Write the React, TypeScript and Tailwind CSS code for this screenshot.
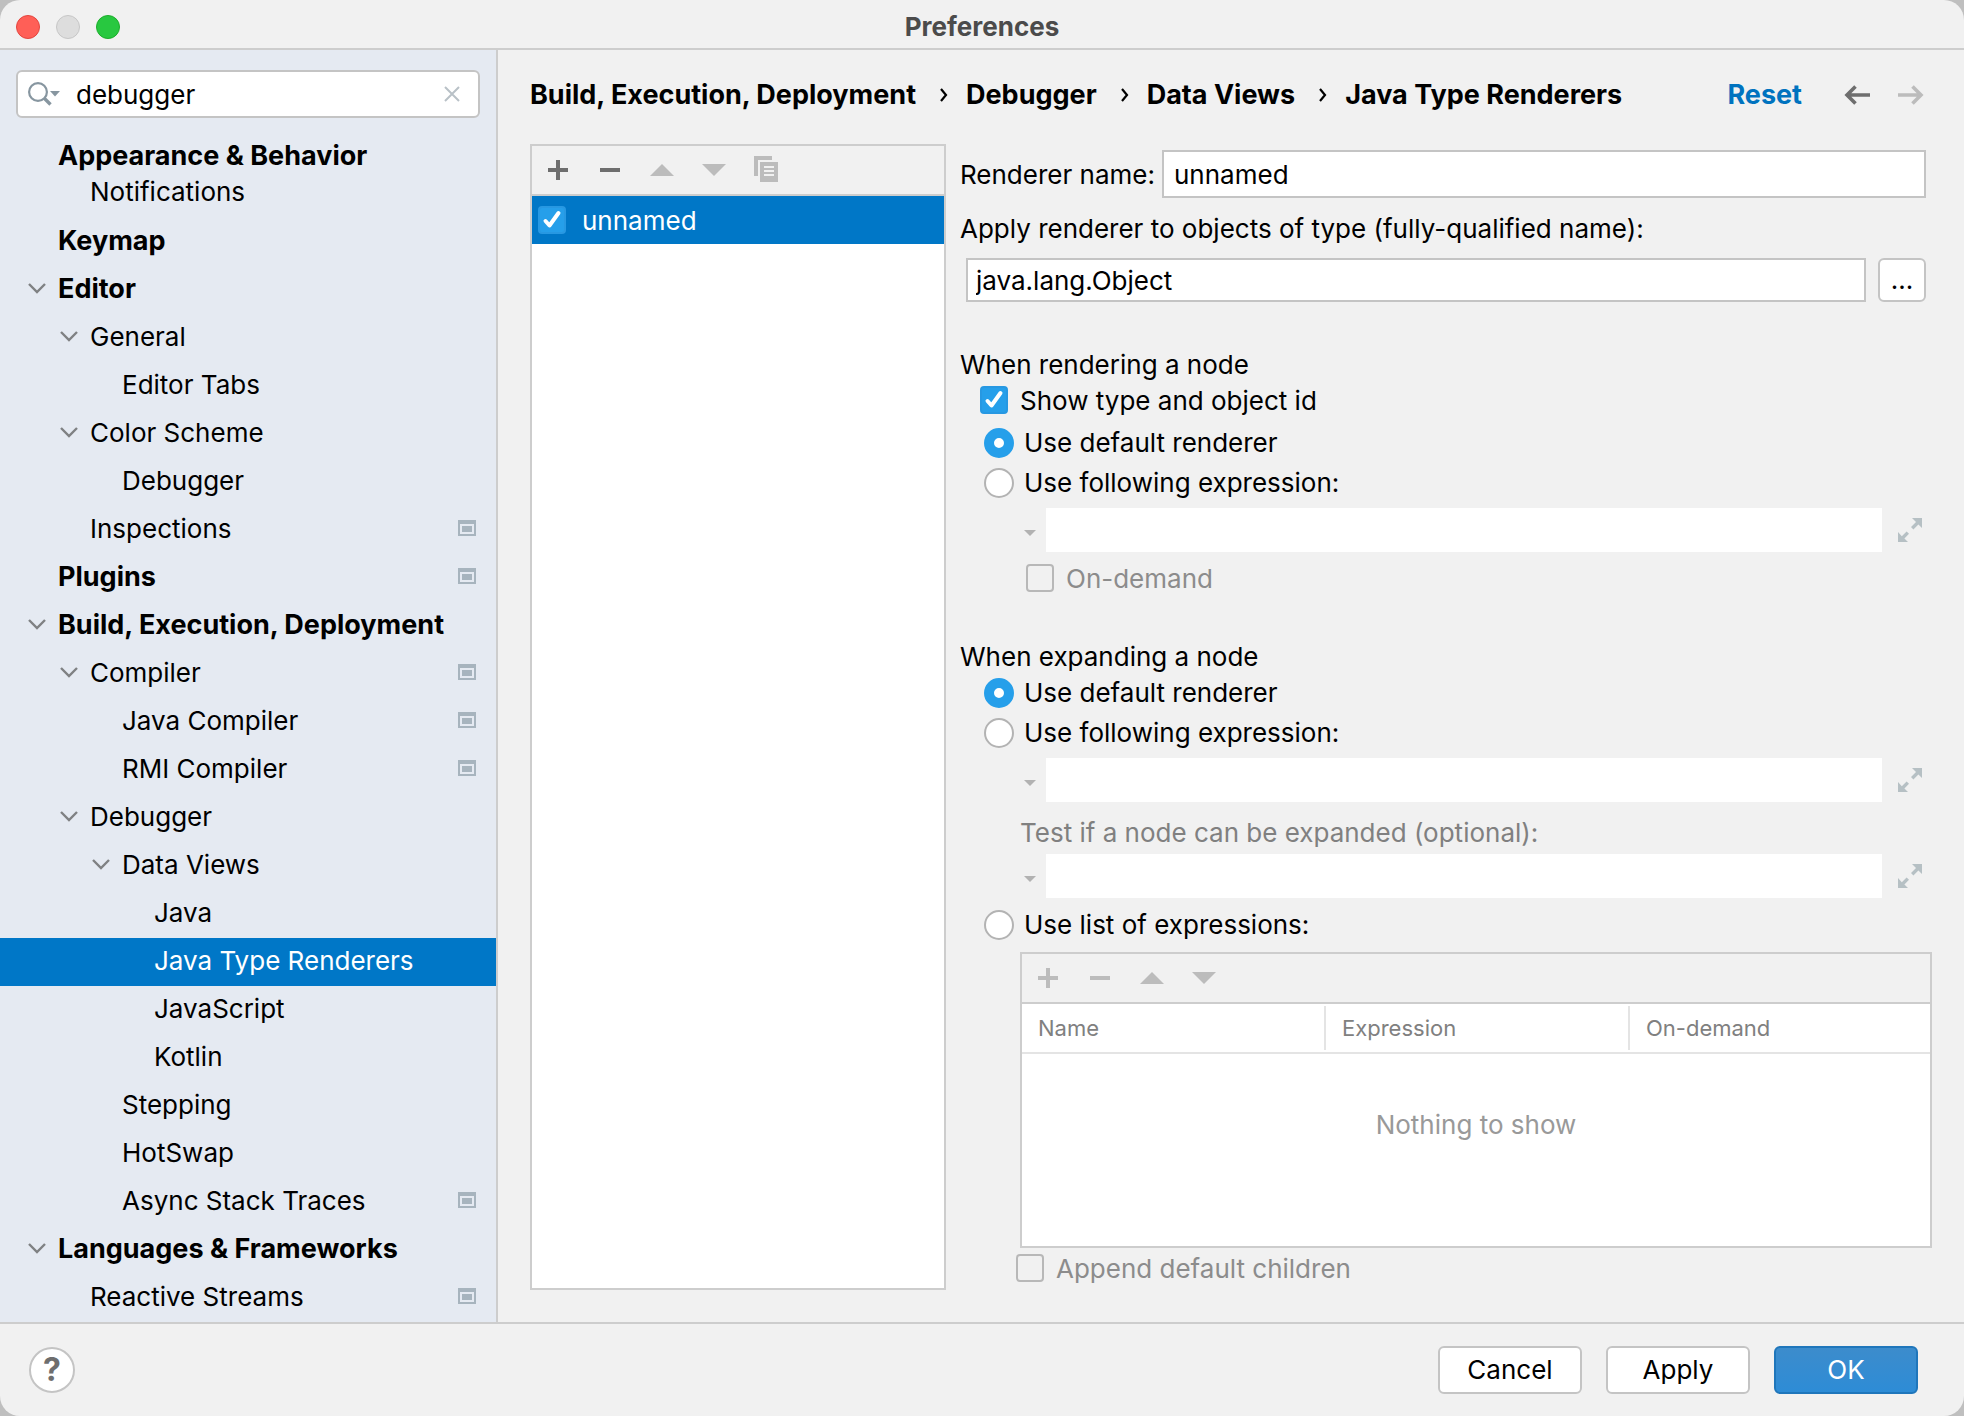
import { useId, useState } from 'react';
import type { ReactNode } from 'react';
import clsx from 'clsx';

interface TreeItem {
  label: string;
  level: number;
  bold?: boolean;
  open?: boolean;
  project?: boolean;
}

const tree: TreeItem[] = [
  { label: 'Keymap', level: 0, bold: true },
  { label: 'Editor', level: 0, bold: true, open: true },
  { label: 'General', level: 1, open: true },
  { label: 'Editor Tabs', level: 2 },
  { label: 'Color Scheme', level: 1, open: true },
  { label: 'Debugger', level: 2 },
  { label: 'Inspections', level: 1, project: true },
  { label: 'Plugins', level: 0, bold: true, project: true },
  { label: 'Build, Execution, Deployment', level: 0, bold: true, open: true },
  { label: 'Compiler', level: 1, open: true, project: true },
  { label: 'Java Compiler', level: 2, project: true },
  { label: 'RMI Compiler', level: 2, project: true },
  { label: 'Debugger', level: 1, open: true },
  { label: 'Data Views', level: 2, open: true },
  { label: 'Java', level: 3 },
  { label: 'Java Type Renderers', level: 3 },
  { label: 'JavaScript', level: 3 },
  { label: 'Kotlin', level: 3 },
  { label: 'Stepping', level: 2 },
  { label: 'HotSwap', level: 2 },
  { label: 'Async Stack Traces', level: 2, project: true },
  { label: 'Languages & Frameworks', level: 0, bold: true, open: true },
  { label: 'Reactive Streams', level: 1, project: true },
];

const indents = ['pl-7', 'pl-[60px]', 'pl-[92px]', 'pl-[124px]'];
const crumbs = ['Build, Execution, Deployment', 'Debugger', 'Data Views', 'Java Type Renderers'];

function Chevron() {
  return (
    <svg width="18" height="14" viewBox="0 0 18 14" fill="none" stroke="#7f8183" strokeWidth="2.4">
      <path d="M1 2l8 8 8-8" />
    </svg>
  );
}

function ProjectIcon() {
  return (
    <svg width="18" height="18" viewBox="0 0 18 18" fill="#a7b4be">
      <path fillRule="evenodd" d="M0 0h18v16H0zM2 4v10h14V4z" />
      <path d="M4 6h10v6H4z" />
    </svg>
  );
}

function TreeRow({ item, selected, onSelect }: { item: TreeItem; selected: boolean; onSelect: () => void }) {
  return (
    <button
      onClick={onSelect}
      className={clsx(
        'flex h-12 w-full items-center pb-0.5 pr-5 text-left',
        indents[item.level],
        item.bold && 'text-[27px] font-bold',
        selected && 'bg-[#0077c7] text-white'
      )}
    >
      <span className="mr-3 w-[18px] shrink-0">{item.open && <Chevron />}</span>
      <span className="flex-1 whitespace-nowrap">{item.label}</span>
      {item.project && <ProjectIcon />}
    </button>
  );
}

function Sidebar() {
  const [query, setQuery] = useState('debugger');
  const [selected, setSelected] = useState(15);
  return (
    <aside className="w-[498px] shrink-0 border-r-2 border-[#cdcdcd] bg-[#e5eaf2]">
      <div className="mx-4 mt-5 mb-5 flex h-12 items-center rounded-md border-2 border-[#c4c4c4] bg-white pl-2.5 pr-4">
        <svg width="34" height="26" viewBox="0 0 34 26" fill="none">
          <circle cx="10" cy="11" r="8.9" stroke="#8796a0" strokeWidth="2.2" />
          <path d="M16.5 17.500l6 6" stroke="#8796a0" strokeWidth="3.4" />
          <path d="M22 10h10l-5 5.500z" fill="#8796a0" />
        </svg>
        <input
          aria-label="Search settings"
          value={query}
          onChange={e => setQuery(e.target.value)}
          className="ml-3.5 min-w-0 flex-1 bg-transparent pt-0.5 outline-none"
        />
        <button aria-label="Clear search" onClick={() => setQuery('')} className="p-0.5">
          <svg width="16" height="16" viewBox="0 0 16 16" stroke="#b9c1c7" strokeWidth="2">
            <path d="M1 1l14 14M15 1L1 15" />
          </svg>
        </button>
      </div>
      <nav>
        <button className="block h-9 w-full pl-[58px] text-left text-[27px] font-bold">Appearance &amp; Behavior</button>
        <button className="mb-2 block h-9 w-full pl-[90px] text-left">Notifications</button>
        {tree.map((item, i) => (
          <TreeRow key={i} item={item} selected={selected === i} onSelect={() => setSelected(i)} />
        ))}
      </nav>
    </aside>
  );
}

function ToolButton({ label, disabled, children }: { label: string; disabled?: boolean; children: ReactNode }) {
  return (
    <button
      aria-label={label}
      disabled={disabled}
      className={clsx('flex h-12 w-[52px] items-center justify-center', disabled ? 'text-[#bcbcbc]' : 'text-[#6e6e6e]')}
    >
      <svg width="28" height="28" viewBox="0 0 28 28" fill="currentColor">
        {children}
      </svg>
    </button>
  );
}

function Toolbar({ disabled, copy }: { disabled?: boolean; copy?: boolean }) {
  return (
    <div className="flex border-b-2 border-[#cdcdcd] bg-[#f1f1f1]">
      <ToolButton label="Add" disabled={disabled}>
        <path d="M12 4h4v8h8v4h-8v8h-4v-8H4v-4h8z" />
      </ToolButton>
      <ToolButton label="Remove" disabled={disabled}>
        <path d="M4 12h20v4H4z" />
      </ToolButton>
      <ToolButton label="Move up" disabled>
        <path d="M14 8l12 12H2z" />
      </ToolButton>
      <ToolButton label="Move down" disabled>
        <path d="M2 8h24L14 20z" />
      </ToolButton>
      {copy && (
        <ToolButton label="Copy" disabled>
          <path d="M2 0h18v4H6v16H2z" />
          <path fillRule="evenodd" d="M8 6h18v20H8zM12 10v2h10v-2zM12 14v2h10v-2zM12 18v2h10v-2z" />
        </ToolButton>
      )}
    </div>
  );
}

interface CheckProps {
  label: string;
  checked?: boolean;
  disabled?: boolean;
  wide?: boolean;
  className?: string;
}

function Check({ label, checked, disabled, wide, className }: CheckProps) {
  return (
    <label className={clsx('flex h-7 items-center', wide ? 'gap-4' : 'gap-3', disabled && 'text-[#8c8c8c]', className)}>
      <span className="relative flex">
        <input
          type="checkbox"
          defaultChecked={checked}
          disabled={disabled}
          className="peer size-7 appearance-none rounded-[4px] border-2 border-[#b8b8b8] bg-white checked:border-[#2798e2] checked:bg-[#269fea] disabled:bg-transparent"
        />
        <svg
          className="pointer-events-none absolute inset-0 hidden peer-checked:block"
          width="28"
          height="28"
          viewBox="0 0 28 28"
          fill="none"
          stroke="white"
          strokeWidth="4"
          strokeLinecap="round"
          strokeLinejoin="round"
        >
          <path d="M7.500 15l4 4.500L20.500 7" />
        </svg>
      </span>
      <span className="pt-0.5">{label}</span>
    </label>
  );
}

function Radio({ name, label, checked, className }: { name: string; label: string; checked?: boolean; className?: string }) {
  return (
    <label className={clsx('ml-6 flex h-[30px] items-center gap-2.5', className)}>
      <input
        type="radio"
        name={name}
        defaultChecked={checked}
        className="size-[30px] appearance-none rounded-full border-2 border-[#b3b3b3] bg-white checked:border-[10px] checked:border-[#269fea]"
      />
      {label}
    </label>
  );
}

function ExpressionField({ label, className }: { label: string; className?: string }) {
  return (
    <div className={clsx('ml-[54px] flex h-11 items-center', className)}>
      <button aria-label={`${label} language`} disabled className="flex w-8 justify-center pt-1.5">
        <svg width="12" height="6" viewBox="0 0 12 6" fill="#b2b2b2">
          <path d="M0 0h12L6 6z" />
        </svg>
      </button>
      <input aria-label={label} disabled className="h-11 min-w-0 flex-1 bg-white px-2" />
      <button aria-label={`Expand ${label}`} disabled className="ml-4 mr-2.5 shrink-0">
        <svg width="24" height="24" viewBox="0 0 24 24" fill="#b6c0c4">
          <path d="M14 0h10v10l-3.600-3.600-5 5-2.400-2.400 5-5z" />
          <path d="M0 14v10h10l-3.600-3.600 4.600-4.600-2.400-2.400-4.800 4.800z" />
        </svg>
      </button>
    </div>
  );
}

function Breadcrumbs() {
  return (
    <header className="mb-1 flex h-[90px] items-center pr-2 text-[27px] font-bold">
      {crumbs.map((c, i) => (
        <span key={c} className="flex items-center whitespace-nowrap">
          {i > 0 && (
            <svg className="ml-6 mr-[18px]" width="8" height="14" viewBox="0 0 8 14" fill="none" stroke="black" strokeWidth="2.200">
              <path d="M1 1l5 6-5 6" />
            </svg>
          )}
          {c}
        </span>
      ))}
      <a href="#reset" className="ml-auto text-[#0073bf]">
        Reset
      </a>
      <button aria-label="Back" className="ml-[42px]">
        <svg width="26" height="20" viewBox="0 0 26 20" fill="none" stroke="#6e6e6e" strokeWidth="3.600">
          <path d="M26 10H3M11.500 1.500L3 10l8.500 8.500" />
        </svg>
      </button>
      <button aria-label="Forward" disabled className="ml-7">
        <svg width="26" height="20" viewBox="0 0 26 20" fill="none" stroke="#bcbcbc" strokeWidth="3.600">
          <path d="M0 10h23M14.500 1.500L23 10l-8.500 8.500" />
        </svg>
      </button>
    </header>
  );
}

function ExpressionTable() {
  return (
    <div className="ml-[60px] mt-3 flex h-[296px] flex-col border-2 border-[#cdcdcd] bg-white">
      <Toolbar disabled />
      <table className="w-full table-fixed border-b-2 border-[#e4e4e4] text-left text-[22px] text-[#808080]">
        <thead>
          <tr className="h-12">
            {['Name', 'Expression', 'On-demand'].map((h, i) => (
              <th key={h} className={clsx('px-0 py-0.5 font-normal', i < 2 && 'w-[304px]')}>
                <div className={clsx('flex h-11 items-center pl-4', i < 2 && 'border-r-2 border-[#e4e4e4]')}>{h}</div>
              </th>
            ))}
          </tr>
        </thead>
      </table>
      <p className="pt-14 text-center text-[#999999]">Nothing to show</p>
    </div>
  );
}

function RendererForm() {
  const id = useId();
  return (
    <section className="min-w-0 flex-1 leading-[30px]">
      <div className="mr-1.5 mt-1.5 flex items-center">
        <label htmlFor={`${id}-name`} className="w-[202px] shrink-0 whitespace-nowrap pt-0.5">
          Renderer name:
        </label>
        <input
          id={`${id}-name`}
          defaultValue="unnamed"
          className="h-12 min-w-0 flex-1 border-2 border-[#c4c4c4] bg-white px-2.5 outline-none"
        />
      </div>
      <label htmlFor={`${id}-type`} className="mt-4 block">
        Apply renderer to objects of type (fully-qualified name):
      </label>
      <div className="ml-1.5 mr-1.5 mt-3.5 flex gap-3">
        <input
          id={`${id}-type`}
          defaultValue="java.lang.Object"
          className="h-11 min-w-0 flex-1 border-2 border-[#c4c4c4] bg-white px-2 outline-none"
        />
        <button aria-label="Browse types" className="h-11 w-12 rounded-md border-2 border-[#c4c4c4] bg-white">
          ...
        </button>
      </div>

      <h2 className="mt-12">When rendering a node</h2>
      <Check label="Show type and object id" checked className="ml-5 mt-1.5" />
      <Radio name="render" label="Use default renderer" checked className="mt-3.5" />
      <Radio name="render" label="Use following expression:" className="mt-2.5" />
      <ExpressionField label="Rendering expression" className="mt-2.5" />
      <Check label="On-demand" disabled className="ml-[66px] mt-3" />

      <h2 className="mt-[50px]">When expanding a node</h2>
      <Radio name="expand" label="Use default renderer" checked className="mt-1.5" />
      <Radio name="expand" label="Use following expression:" className="mt-2.5" />
      <ExpressionField label="Children expression" className="mt-2.5" />
      <p className="ml-[60px] mt-4 text-[#808080]">Test if a node can be expanded (optional):</p>
      <ExpressionField label="Expandable test" className="mt-1.5" />
      <Radio name="expand" label="Use list of expressions:" className="mt-3" />
      <ExpressionTable />
      <Check label="Append default children" disabled className="ml-14 mt-1.5" />
    </section>
  );
}

export default function App() {
  return (
    <div className="min-h-screen bg-[#bfbfbf] font-['Inter','Liberation_Sans',sans-serif] text-[26px] leading-9 text-black">
      <div className="flex min-h-screen flex-col overflow-hidden rounded-[20px] bg-[#f1f1f1]">
        <div className="flex h-[50px] items-center border-b-2 border-[#cdcdcd] px-4 pt-1.5">
          <div className="flex flex-1 gap-4">
            <button aria-label="Close" className="size-6 rounded-full border border-[#e2463f] bg-[#ff5f57]" />
            <button aria-label="Minimize" className="size-6 rounded-full border border-[#c6c6c6] bg-[#dddddd]" />
            <button aria-label="Zoom" className="size-6 rounded-full border border-[#1dad2b] bg-[#28c840]" />
          </div>
          <h1 className="font-bold text-[#4b4b4b]">Preferences</h1>
          <div className="flex-1" />
        </div>

        <div className="flex flex-1">
          <Sidebar />
          <main className="flex min-w-0 flex-1 flex-col px-8 pb-8">
            <Breadcrumbs />
            <div className="flex flex-1 gap-3.5">
              <div className="w-[416px] shrink-0 border-2 border-[#cdcdcd] bg-white">
                <Toolbar copy />
                <div className="flex h-12 items-center bg-[#0077c7] pl-1.5 text-white">
                  <Check label="unnamed" checked wide />
                </div>
              </div>
              <RendererForm />
            </div>
          </main>
        </div>

        <footer className="flex h-[94px] items-center border-t-2 border-[#cdcdcd] pl-[29px] pr-[46px]">
          <button
            aria-label="Help"
            className="flex size-[46px] items-center justify-center rounded-full border-2 border-[#c4c4c4] bg-white text-[32px] font-bold text-[#6e6e6e]"
          >
            ?
          </button>
          <div className="ml-auto flex gap-6">
            <button className="h-12 w-36 rounded-md border-2 border-[#c4c4c4] bg-white">Cancel</button>
            <button className="h-12 w-36 rounded-md border-2 border-[#c4c4c4] bg-white">Apply</button>
            <button className="h-12 w-36 rounded-md border-2 border-[#1f76bb] bg-linear-to-b from-[#3c8ccc] to-[#2d8cd6] text-white">
              OK
            </button>
          </div>
        </footer>
      </div>
    </div>
  );
}
